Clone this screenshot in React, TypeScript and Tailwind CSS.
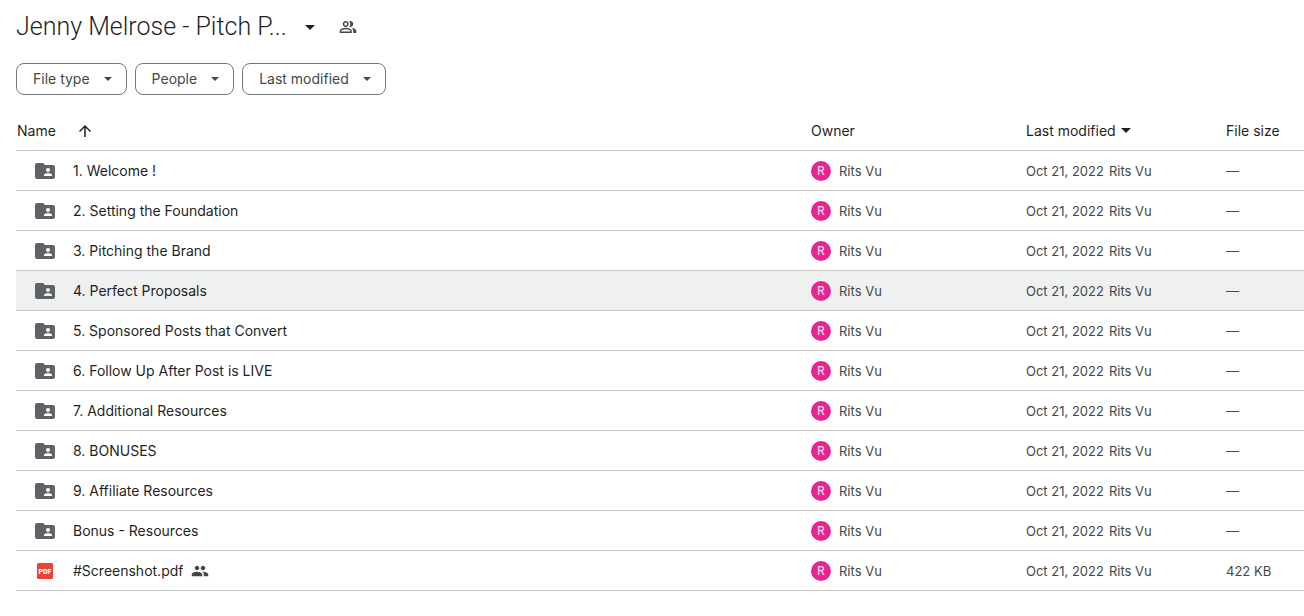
import { MdArrowUpward, MdFolderShared, MdOutlinePeopleAlt, MdPeople } from 'react-icons/md';

type DriveItem = {
  name: string;
  kind: 'folder' | 'pdf';
  size: string;
  shared?: boolean;
  active?: boolean;
};

const filters = ['File type', 'People', 'Last modified'];

const items: DriveItem[] = [
  { name: '1. Welcome !', kind: 'folder', size: '—' },
  { name: '2. Setting the Foundation', kind: 'folder', size: '—' },
  { name: '3. Pitching the Brand', kind: 'folder', size: '—' },
  { name: '4. Perfect Proposals', kind: 'folder', size: '—', active: true },
  { name: '5. Sponsored Posts that Convert', kind: 'folder', size: '—' },
  { name: '6. Follow Up After Post is LIVE', kind: 'folder', size: '—' },
  { name: '7. Additional Resources', kind: 'folder', size: '—' },
  { name: '8. BONUSES', kind: 'folder', size: '—' },
  { name: '9. Affiliate Resources', kind: 'folder', size: '—' },
  { name: 'Bonus - Resources', kind: 'folder', size: '—' },
  { name: '#Screenshot.pdf', kind: 'pdf', size: '422 KB', shared: true },
];

function Caret({ className }: { className: string }) {
  return (
    <svg viewBox="0 0 10 5" className={className} fill="currentColor" aria-hidden="true">
      <path d="M0 0h10L5 5z" />
    </svg>
  );
}

function FileIcon({ kind }: { kind: DriveItem['kind'] }) {
  if (kind === 'folder') {
    return <MdFolderShared className="size-6 text-[#5f6368]" aria-hidden="true" />;
  }
  return (
    <svg viewBox="0 0 24 24" className="size-6" aria-hidden="true">
      <rect x="4" y="4" width="16" height="16" rx="1.5" fill="#ea4335" />
      <text x="12" y="14.5" textAnchor="middle" fontSize="7" fontWeight="900" fill="#fff" className="font-['Roboto',sans-serif]">
        PDF
      </text>
    </svg>
  );
}

function ItemRow({ item }: { item: DriveItem }) {
  const cell = 'h-10 border-b border-[#c7c7c7] p-0';
  return (
    <tr className={item.active ? 'bg-[#eff1f1]' : 'bg-white'}>
      <td className={cell}>
        <div className="flex items-center pl-[17px]">
          <FileIcon kind={item.kind} />
          <a href="#" className="ml-4 truncate text-sm text-[#1f1f1f]">{item.name}</a>
          {item.shared && <MdPeople className="ml-2 size-[18px] shrink-0 text-[#444746]" aria-label="Shared" />}
        </div>
      </td>
      <td className={cell}>
        <div className="flex items-center gap-2">
          <span className="flex size-5 items-center justify-center rounded-full bg-[#e52592] text-xs font-medium text-[#fbcfe6]">R</span>
          <span>Rits Vu</span>
        </div>
      </td>
      <td className={cell}>
        <div className="flex gap-[5px] whitespace-nowrap">
          <span>Oct 21, 2022</span>
          <span>Rits Vu</span>
        </div>
      </td>
      <td className={`${cell} whitespace-nowrap`}>{item.size}</td>
    </tr>
  );
}

export default function App() {
  const head = 'h-10 border-b border-[#c7c7c7] p-0 text-left font-normal whitespace-nowrap';
  return (
    <main className="min-h-screen bg-white pl-4 font-['Inter','Liberation_Sans',sans-serif] text-sm text-[#444746]">
      <header className="flex h-[42px] items-center pt-3">
        <h1>
          <button type="button" className="flex items-center gap-[18px] font-['Roboto','Liberation_Sans',sans-serif] text-[25px] font-light text-[#1f1f1f]">
            Jenny Melrose - Pitch P...
            <Caret className="h-[5px] w-2.5" />
          </button>
        </h1>
        <button type="button" aria-label="Manage access" className="ml-6">
          <MdOutlinePeopleAlt className="size-[18px]" />
        </button>
      </header>

      <div className="mt-[21px] flex gap-2">
        {filters.map((label) => (
          <button key={label} type="button" className="flex h-8 items-center gap-3.5 rounded-lg border border-[#747775] pr-3.5 pl-4">
            {label}
            <Caret className="h-1 w-2" />
          </button>
        ))}
      </div>

      <table className="mt-4 w-full table-fixed border-separate border-spacing-0">
        <thead className="text-[#1f1f1f]">
          <tr>
            <th className={head}>
              <button type="button" className="flex items-center gap-5 pl-px">
                Name
                <MdArrowUpward className="size-[18px]" aria-label="Sorted ascending" />
              </button>
            </th>
            <th className={`${head} w-[215px]`}>Owner</th>
            <th className={`${head} w-[200px]`}>
              <button type="button" className="flex items-center gap-[5px]">
                Last modified
                <Caret className="h-[5px] w-2.5" />
              </button>
            </th>
            <th className={`${head} w-[78px]`}>File size</th>
          </tr>
        </thead>
        <tbody className="text-[13px] leading-[22px]">
          {items.map((item) => (
            <ItemRow key={item.name} item={item} />
          ))}
        </tbody>
      </table>
    </main>
  );
}
